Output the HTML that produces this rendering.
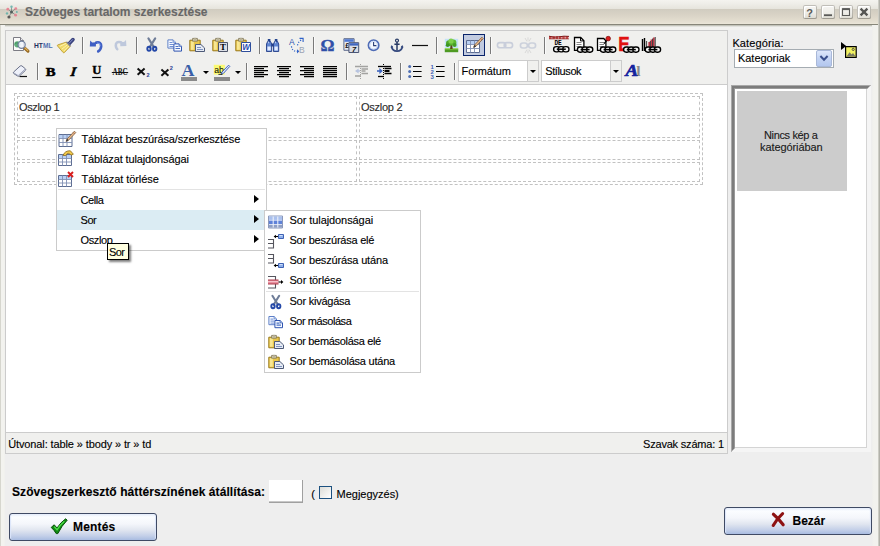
<!DOCTYPE html>
<html lang="hu">
<head>
<meta charset="utf-8">
<title>Szöveges tartalom szerkesztése</title>
<style>
*{box-sizing:border-box;margin:0;padding:0}
html,body{width:880px;height:546px;overflow:hidden}
body{background:#eeeeee;font-family:"Liberation Sans",sans-serif;font-size:11px;color:#000;position:relative}
.a{position:absolute}
.t{position:absolute;line-height:0;white-space:nowrap;-webkit-text-stroke:.12px currentColor}
.t::before{content:"";display:inline-block;height:20px}
svg{position:absolute;overflow:visible;z-index:5}
svg.mi{z-index:12}
#edge-l{left:0;top:25px;width:5px;height:521px;background:linear-gradient(90deg,#d6d6ce 0,#d6d6ce 1px,#f3f3ef 1px,#f3f3ef 4px,#efefed 5px)}
#edge-r{left:872px;top:25px;width:6px;height:521px;background:linear-gradient(90deg,#efefed 0,#f2f2ee 2px,#f2f2ee 6px)}
#edge-r2{left:878px;top:0;width:2px;height:546px;background:linear-gradient(90deg,#cdcdc5 0,#cdcdc5 1px,#b2b2aa 1px,#b2b2aa 2px);z-index:3}
#titlebar{left:0;top:0;width:880px;height:30px;background:linear-gradient(#f4f3ef 0,#eeede8 4px,#e6e4dc 9px,#cfcbbf 9px,#d2cdc1 10px,#d9d3c6 15px,#e0dacc 19px,#e7e2d5 23px,#ece8da 24px,#87867a 24px,#87867a 25px,#c3c4ba 25px,#c3c4ba 26px,#e2e2de 26px,#e2e2de 27px,#f2f2f0 27px,#f2f2f0 30px)}
.wb{top:5px;width:14px;height:14px;border-radius:2px;background:linear-gradient(#f7f6f3,#eeede8 55%,#dcdad1);box-shadow:inset 0 0 0 1px rgba(140,137,125,.55),inset 0 -1px 0 rgba(100,98,88,.35),inset 2px 2px 0 rgba(255,255,255,.95)}
#editor{left:5px;top:30px;width:723px;height:424px;border:1px solid #cccccc;background:#fff}
#toolbar{left:0;top:0;width:721px;height:54px;background:#f0f0ee;border-bottom:1px solid #cccccc}
#status{left:0;top:401px;width:721px;height:21px;background:#f0f0ee;border-top:1px solid #cccccc}
table.ed{position:absolute;left:8px;top:62px;width:689px;border:1px dashed #c2c2c2;border-spacing:2px;border-collapse:separate;table-layout:fixed}
table.ed td{border:1px dashed #c2c2c2;height:20px;padding:0}
.sep{position:absolute;width:2px;height:17px;background:linear-gradient(90deg,#7a7a7a 0,#7a7a7a 1px,#fbfbfb 1px,#fbfbfb 2px)}
.lb{position:absolute;height:22px;border:1px solid #cccccc;background:#fff}
.lb i{position:absolute;right:0;top:0;width:11px;height:20px;border-left:1px solid #cccccc;background:#f0f0ee}
.lb i::after{content:"";position:absolute;left:2px;top:9px;border:3px solid transparent;border-top:3px solid #000;border-bottom:0;width:0;height:0}
.arr{position:absolute;width:0;height:0;border:3px solid transparent;border-top:3px solid #000;border-bottom:0}
.btnact{position:absolute;width:22px;height:22px;border:1px solid #0a246a;background:#c2cbe0}
.menu{position:absolute;background:#fff;border:1px solid #cbcbcb;z-index:10}
.menu hr{position:absolute;left:1px;right:1px;height:1px;border:0;background:#e3e3e3}
.sub{position:absolute;width:0;height:0;border:4px solid transparent;border-left:5px solid #000;border-right:0}
.hl{position:absolute;left:0;right:0;height:20px;background:#dbecf3}
.btn{position:absolute;height:28px;width:148px;border:1px solid #3f4a64;border-radius:3px;background:linear-gradient(#e4ecfb 0,#fbfdff 3px,#f4f6fb 10px,#e1e6f0 16px,#c3cfe8 22px,#a9bce1 26px);box-shadow:inset 2px 0 1px -1px #dbe5fa,inset -2px 0 1px -1px #dbe5fa}
#tip{left:107px;top:243px;width:22px;height:17px;background:#ffffe1;border:1px solid #000;z-index:20;box-shadow:2px 2px 2px rgba(0,0,0,.5)}

</style>
</head>
<body>
<div id="titlebar" class="a"></div>
<div id="edge-l" class="a"></div>
<div id="edge-r" class="a"></div>
<div id="edge-r2" class="a"></div>
<div class="a wb" style="left:803px"></div>
<div class="a wb" style="left:821px"></div>
<div class="a wb" style="left:839px"></div>
<div class="a wb" style="left:857px"></div>

<div id="editor" class="a">
  <div id="toolbar" class="a"></div>
  <table class="ed"><colgroup><col style="width:340px"><col></colgroup>
    <tr><td></td><td></td></tr>
    <tr><td></td><td></td></tr>
    <tr><td></td><td></td></tr>
    <tr><td></td><td></td></tr>
  </table>
  <div id="status" class="a"></div>
</div>

<!-- toolbar widgets (page coordinates) -->
<div class="btnact" style="left:463px;top:34px"></div>
<svg style="left:11px;top:35px" width="20" height="20" viewBox="0 0 20 20" ><path d="M2.5 2.5h7l3 3v10h-10z" fill="#fcfcfc" stroke="#7c7c84"/><path d="M9.5 2.5v3h3" fill="#e8e8ee" stroke="#7c7c84"/>
<circle cx="6.3" cy="9.3" r="3.1" fill="#5fae7a"/><path d="M4 8.5q2-1.5 3.5 0t-1 3" fill="none" stroke="#3d8a5c" stroke-width=".8"/>
<path d="M13.4 12.8l3.6 3.4" stroke="#94661f" stroke-width="3" stroke-linecap="round"/><path d="M13.8 12.8l3 2.8" stroke="#e2b45a" stroke-width="1.2" stroke-linecap="round"/>
<circle cx="10.6" cy="9.7" r="3.6" fill="#eef3fb" fill-opacity=".85" stroke="#6f7f9e" stroke-width="1.2"/></svg>
<svg style="left:34px;top:35px" width="20" height="20" viewBox="0 0 20 20" ><text x="0" y="13" font-family="Liberation Sans,sans-serif" font-weight="bold" font-size="7" textLength="18.5" lengthAdjust="spacingAndGlyphs"><tspan fill="#1f2f5c">HT</tspan><tspan fill="#4f6fb0">ML</tspan></text></svg>
<svg style="left:57px;top:35px" width="20" height="20" viewBox="0 0 20 20" ><path d="M16 4.6l-4.2 4.4" stroke="#39427c" stroke-width="3.6" stroke-linecap="round"/><path d="M15.6 4.6l-3.4 3.6" stroke="#8d96d2" stroke-width="1" stroke-linecap="round"/>
<path d="M9.6 7l3.8 4.2-6 6.4q-.8.4-1.4-.2l-5.6-6.6q-.2-.8.6-1z" fill="#f0da68" stroke="#b8942a" stroke-width=".8"/><path d="M9 8.4l-6.2 3M10.4 9.8l-5.6 4.4M11.8 11l-5 5" stroke="#fdf2b0" stroke-width="1"/><path d="M9.6 7l3.8 4.2" stroke="#7a7f98" stroke-width="1.4"/></svg>
<svg style="left:87px;top:35px" width="20" height="20" viewBox="0 0 20 20" ><path d="M9.2 7.6q5.2-1 5 3.6-.2 3.2-3 5.2" fill="none" stroke="#3f5fc4" stroke-width="2.6" stroke-linecap="round"/><path d="M2.8 11.4l.4-6 2 2.1 3.8-.3-.1 4.4z" fill="#3f5fc4"/><path d="M10 8q3.6-.4 3.2 3.2" fill="none" stroke="#8fa8ee" stroke-width=".9"/></svg>
<svg style="left:110px;top:35px" width="20" height="20" viewBox="0 0 20 20" ><g opacity=".33"><path d="M10.8 7.2q-5.2-1.2-5 3.6.1 2 1.4 3.4" fill="none" stroke="#5b78b8" stroke-width="2.6" stroke-linecap="round"/><path d="M16.4 11l-.4-6-2 2.1-3.8-.3.1 4.4z" fill="#5b78b8"/></g></svg>
<svg style="left:141px;top:35px" width="20" height="20" viewBox="0 0 20 20" ><path d="M7.4 3.4l5.6 9M14.2 3.4l-5.6 9" stroke="#6f7d98" stroke-width="2.1" stroke-linecap="round"/><ellipse cx="8" cy="13.8" rx="1.7" ry="2.1" fill="none" stroke="#2448a8" stroke-width="1.9"/><ellipse cx="13.7" cy="13.8" rx="1.7" ry="2.1" fill="none" stroke="#2448a8" stroke-width="1.9"/></svg>
<svg style="left:164px;top:35px" width="20" height="20" viewBox="0 0 20 20" ><path d="M3.9 4.9h5.2l2.4 2.4v5.8h-7.6z" fill="#f6f9ff" stroke="#5f80c8"/><path d="M9.1 4.9v2.4h2.4" fill="#cfe0fa" stroke="#5f80c8" stroke-width=".8"/><path d="M5.5 7.5h3M5.5 9.5h4M5.5 11.5h4" stroke="#6f8fd4"/>
<path d="M9.9 8.9h5.2l2.4 2.4v4.8h-7.6z" fill="#f6f9ff" stroke="#2f55b0"/><path d="M15.1 8.9v2.4h2.4" fill="#cfe0fa" stroke="#2f55b0" stroke-width=".8"/><path d="M11.5 11.5h3M11.5 13.5h4.5" stroke="#4f74c4" stroke-width="1.1"/></svg>
<svg style="left:187px;top:35px" width="20" height="20" viewBox="0 0 20 20" ><path d="M2.8 5.2h10.4v10.6h-10.4z" fill="#e8c64a" stroke="#9a7a1c"/><path d="M3.8 6.2h3v8.6h-3z" fill="#f8e793"/><path d="M5.6 3.4h4.8v2.8h-4.8z" fill="#d9d2b4" stroke="#7e7558" stroke-width=".8"/><circle cx="8" cy="4" r=".9" fill="#f7f3da" stroke="#7e7558" stroke-width=".5"/><path d="M8.5 9.5h5.4l3.6 3.4v3.6h-9z" fill="#e6ebf4" stroke="#4d5a78"/><path d="M10 12.5h4M10 14.5h6" stroke="#7f93bf"/></svg>
<svg style="left:210px;top:35px" width="20" height="20" viewBox="0 0 20 20" ><path d="M2.8 5.2h10.4v10.6h-10.4z" fill="#e8c64a" stroke="#9a7a1c"/><path d="M3.8 6.2h3v8.6h-3z" fill="#f8e793"/><path d="M5.6 3.4h4.8v2.8h-4.8z" fill="#d9d2b4" stroke="#7e7558" stroke-width=".8"/><circle cx="8" cy="4" r=".9" fill="#f7f3da" stroke="#7e7558" stroke-width=".5"/><path d="M8.5 7.5h9v9h-9z" fill="#dcdfe6" stroke="#4d5468"/><text x="10" y="15.2" font-family="Liberation Serif,serif" font-weight="bold" font-size="9" fill="#000">T</text></svg>
<svg style="left:233px;top:35px" width="20" height="20" viewBox="0 0 20 20" ><path d="M2.8 5.2h10.4v10.6h-10.4z" fill="#e8c64a" stroke="#9a7a1c"/><path d="M3.8 6.2h3v8.6h-3z" fill="#f8e793"/><path d="M5.6 3.4h4.8v2.8h-4.8z" fill="#d9d2b4" stroke="#7e7558" stroke-width=".8"/><circle cx="8" cy="4" r=".9" fill="#f7f3da" stroke="#7e7558" stroke-width=".5"/><path d="M8.5 7.5h9v9h-9z" fill="#fdfdff" stroke="#2f4f9c"/><text x="9.3" y="15.3" font-family="Liberation Sans,sans-serif" font-weight="bold" font-style="italic" font-size="8.5" fill="#2a4db0" textLength="7.6" lengthAdjust="spacingAndGlyphs">W</text></svg>
<svg style="left:264px;top:35px" width="20" height="20" viewBox="0 0 20 20" ><path d="M3.8 4h2.6v3h-2.6zM10.8 4h2.6v3h-2.6z" fill="#24448e"/><path d="M2.5 9l1.2-2.6h2.8l1.2 2.6v7.5h-5.2zM9.5 9l1.2-2.6h2.8l1.2 2.6v7.5h-5.2z" fill="#5f84d0" stroke="#24408a" stroke-width=".9"/><path d="M7.5 8.5h2v3h-2z" fill="#24408a"/><path d="M3.4 11.6h3.4v4h-3.4zM10.4 11.6h3.4v4h-3.4z" fill="#e4edff"/><path d="M4 7.4h1M11 7.4h1" stroke="#b8ccf4" stroke-width="1.6"/></svg>
<svg style="left:287px;top:35px" width="20" height="20" viewBox="0 0 20 20" ><text x="2" y="9.5" font-family="Liberation Sans,sans-serif" font-size="8.5" fill="#2f55b0">A</text><text x="12" y="17.5" font-family="Liberation Sans,sans-serif" font-size="8.5" fill="#9aa3b4">B</text>
<path d="M4.5 11.2q.4 5 5.6 5.2" fill="none" stroke="#2f62c8" stroke-width="1.2" stroke-dasharray="1.2 1.5"/><path d="M10 14.2l2.4 2.1-2.4 2.1z" fill="#2f62c8"/>
<path d="M10.5 10.4q1-4.6 4.2-5.4" fill="none" stroke="#2f62c8" stroke-width="1.2" stroke-dasharray="1.2 1.5"/><path d="M12.5 3.4h3.6v3.6" fill="none" stroke="#2f62c8" stroke-width="1.1"/></svg>
<svg style="left:318px;top:35px" width="20" height="20" viewBox="0 0 20 20" ><text x="2.4" y="15.9" font-family="Liberation Serif,serif" font-weight="bold" font-size="17" fill="#2f4fa8" stroke="#2f4fa8" stroke-width=".4" textLength="14" lengthAdjust="spacingAndGlyphs">Ω</text></svg>
<svg style="left:341px;top:35px" width="20" height="20" viewBox="0 0 20 20" ><path d="M2.9 3.7h10.2v11.6h-10.2z" fill="#e6eaf2" stroke="#5d6a8c"/><path d="M3.4 4.2h9.2v2.6h-9.2z" fill="#4f78d4"/><text x="4.2" y="13" font-family="Liberation Sans,sans-serif" font-weight="bold" font-size="7.5" fill="#111">£</text>
<path d="M7.9 7.7h9.8v9.8h-9.8z" fill="#d9dde6" stroke="#4a5676"/><path d="M8.4 8.2h8.8v2.4h-8.8z" fill="#3f66c0"/><text x="11" y="17" font-family="Liberation Sans,sans-serif" font-weight="bold" font-style="italic" font-size="7.5" fill="#111">7</text></svg>
<svg style="left:364px;top:35px" width="20" height="20" viewBox="0 0 20 20" ><circle cx="9.6" cy="10.2" r="5.2" fill="#e6edfb" stroke="#4f6cb6" stroke-width="1.7"/><circle cx="9.6" cy="10.2" r="3.9" fill="#f6f9ff" stroke="#c2d0f0" stroke-width=".8"/><path d="M9.6 7v3.6h2.8" fill="none" stroke="#2c3f78" stroke-width="1.1"/></svg>
<svg style="left:387px;top:35px" width="20" height="20" viewBox="0 0 20 20" ><circle cx="10" cy="5.6" r="1.5" fill="none" stroke="#2a3c66" stroke-width="1.2"/><path d="M10 7v8.6M7.4 9.2h5.2" stroke="#2a3c66" stroke-width="1.5"/><path d="M4.6 11.4q.6 4.6 5.4 4.8 4.8-.2 5.4-4.8" fill="none" stroke="#34497e" stroke-width="1.8"/><path d="M3.6 12.8l1-2.8 1.8 2.2zM16.4 12.8l-1-2.8-1.8 2.2z" fill="#34497e"/></svg>
<svg style="left:410px;top:35px" width="20" height="20" viewBox="0 0 20 20" ><path d="M2 10.5h16" stroke="#111" stroke-width="1.2"/></svg>
<svg style="left:441px;top:35px" width="20" height="20" viewBox="0 0 20 20" ><path d="M3.8 3.8h13.4v13.4h-13.4z" fill="#c4e2f8"/><path d="M3.8 13.8h13.4v3.4h-13.4z" fill="#4f9a22"/><path d="M3.8 13.2h13.4v1.2h-13.4z" fill="#9ad84a"/>
<path d="M9.6 9.5h1.6l.5 4.6h-2.6z" fill="#5a4516"/><circle cx="8" cy="8.2" r="3" fill="#4fa628"/><circle cx="12.2" cy="7.6" r="3.2" fill="#5cb82e"/><circle cx="10" cy="6" r="2.6" fill="#7fd04a"/><circle cx="13.6" cy="10" r="2" fill="#459e24"/><circle cx="6.6" cy="10.2" r="1.8" fill="#3c9420"/></svg>
<svg style="left:464px;top:35px" width="20" height="20" viewBox="0 0 20 20" ><path d="M2.5 5.5h13v12h-13z" fill="#fff" stroke="#5d6d92"/><path d="M3 6h12v3h-12z" fill="#b9d0f4"/><path d="M2.5 9.5h13M2.5 13.5h13M6.5 5.5v12M10.5 5.5v12" stroke="#7f8fb2" stroke-width=".9"/>
<path d="M17.9 2.2l1.4 1.4-7.2 7.6-2.6 1.2 1.2-2.6z" fill="#e8b98c" stroke="#7a5a3a" stroke-width=".8"/><path d="M16.6 3.4l1.5 1.5" stroke="#b06a4a" stroke-width="1"/><path d="M9.5 12.4l1.2-2.6 1.4 1.4z" fill="#333"/></svg>
<svg style="left:495px;top:35px" width="20" height="20" viewBox="0 0 20 20" ><g opacity=".55" fill="none" stroke="#aab4cc" stroke-width="1.6"><rect x="2.4" y="7.6" width="8.4" height="5.2" rx="2.6"/><rect x="9.2" y="7.6" width="8.4" height="5.2" rx="2.6"/></g></svg>
<svg style="left:518px;top:35px" width="20" height="20" viewBox="0 0 20 20" ><g opacity=".5" fill="none" stroke="#aab4cc" stroke-width="1.6"><rect x="2.4" y="8" width="7" height="5" rx="2.5"/><rect x="10.6" y="8" width="7" height="5" rx="2.5"/></g><g opacity=".5" stroke="#c4c4c4" stroke-width="1"><path d="M7 3l2 3.4M13 3l-2 3.4M10 2.4v3.4M7 18l2-3.4M13 18l-2-3.4M10 18.4v-3"/></g></svg>
<svg style="left:549px;top:35px" width="20" height="20" viewBox="0 0 20 20" ><path d="M0 2.6h20" stroke="#c84a4a" stroke-width="2.6" stroke-dasharray="2.6 .7"/><path d="M0 1.2q5 1.6 10 .6t10-.4" fill="none" stroke="#7e1a1a" stroke-width="1"/><path d="M0 3.9h20" stroke="#8e2a2a" stroke-width=".7"/><text x="5.4" y="10.4" font-family="Liberation Mono,monospace" font-weight="bold" font-size="6.4" fill="#000" textLength="7.4" lengthAdjust="spacingAndGlyphs">DE</text><g fill="#f2f2f2" stroke="#000" stroke-width="1.35"><rect x="4.6" y="11.6" width="6.2" height="5.2" rx="2.6"/><rect x="9.2" y="11.6" width="6.2" height="5.2" rx="2.6"/><rect x="13.799999999999999" y="11.6" width="6.2" height="5.2" rx="2.6"/></g><path d="M7.8 14.2h9" stroke="#000" stroke-width="1.5"/></svg>
<svg style="left:572px;top:35px" width="20" height="20" viewBox="0 0 20 20" ><path d="M2.5 2.5h6.2l3.2 3.2v9.6h-9.4z" fill="#fff" stroke="#000" stroke-width="1.3"/><path d="M8.5 2.5v3.4h3.4" fill="none" stroke="#000"/><path d="M4.5 7.5h5M4.5 9.5h5M4.5 11.5h4" stroke="#777" stroke-width=".9"/><g fill="#f2f2f2" stroke="#000" stroke-width="1.35"><rect x="5.4" y="12" width="6.2" height="5.2" rx="2.6"/><rect x="10.0" y="12" width="6.2" height="5.2" rx="2.6"/><rect x="14.6" y="12" width="6.2" height="5.2" rx="2.6"/></g><path d="M8.600000000000001 14.6h9" stroke="#000" stroke-width="1.5"/></svg>
<svg style="left:595px;top:35px" width="20" height="20" viewBox="0 0 20 20" ><path d="M2.5 3.5h6.2l2.2 2.2v9.6h-8.4z" fill="#fff" stroke="#000" stroke-width="1.3"/><path d="M4.5 7.5h4.5M4.5 9.5h4.5M4.5 11.5h4" stroke="#777" stroke-width=".9"/><path d="M9 8.6l3.6-4" stroke="#000" stroke-width="1.3"/><circle cx="13.2" cy="3.6" r="2.3" fill="#d81e1e" stroke="#7a0f0f" stroke-width=".7"/><g fill="#f2f2f2" stroke="#000" stroke-width="1.35"><rect x="5.4" y="12" width="6.2" height="5.2" rx="2.6"/><rect x="10.0" y="12" width="6.2" height="5.2" rx="2.6"/><rect x="14.6" y="12" width="6.2" height="5.2" rx="2.6"/></g><path d="M8.600000000000001 14.6h9" stroke="#000" stroke-width="1.5"/></svg>
<svg style="left:618px;top:35px" width="20" height="20" viewBox="0 0 20 20" ><text x="0.2" y="15.6" font-family="Liberation Sans,sans-serif" font-weight="bold" font-size="20" fill="#e01010" stroke="#e01010" stroke-width=".5" textLength="11.4" lengthAdjust="spacingAndGlyphs">E</text><g fill="#f2f2f2" stroke="#000" stroke-width="1.35"><rect x="5.6" y="12" width="6.2" height="5.2" rx="2.6"/><rect x="10.2" y="12" width="6.2" height="5.2" rx="2.6"/><rect x="14.799999999999999" y="12" width="6.2" height="5.2" rx="2.6"/></g><path d="M8.8 14.6h9" stroke="#000" stroke-width="1.5"/></svg>
<svg style="left:641px;top:35px" width="20" height="20" viewBox="0 0 20 20" ><path d="M1.5 4v12M3.5 3v13" stroke="#000" stroke-width="1.4"/><path d="M5.5 6v10" stroke="#555" stroke-width="1.2"/><path d="M8.2 7v8M10.4 4.6v10M12.8 2.4v12" stroke="#c43a4a" stroke-width="1.7"/><path d="M9.3 6v9M11.6 3.6v11M14.2 2v11" stroke="#222" stroke-width=".9"/><g fill="#f2f2f2" stroke="#000" stroke-width="1.35"><rect x="4.2" y="12" width="6.2" height="5.2" rx="2.6"/><rect x="8.8" y="12" width="6.2" height="5.2" rx="2.6"/><rect x="13.399999999999999" y="12" width="6.2" height="5.2" rx="2.6"/></g><path d="M7.4 14.6h9" stroke="#000" stroke-width="1.5"/></svg>
<svg style="left:11px;top:61px" width="20" height="20" viewBox="0 0 20 20" ><path d="M2.6 11l6.6-6q.9-.7 1.8 0l3.4 2.8q.7.8 0 1.6l-6 5.6q-.9.6-1.8 0l-3.8-2.4q-.8-.8-.2-1.6z" fill="#eef1fa" stroke="#6a7088" stroke-width="1"/><path d="M3 12l4.2 2.6 6.8-6.4" fill="none" stroke="#9aa0b8" stroke-width=".9"/><path d="M8.6 15.5h7.4" stroke="#111" stroke-width="1.2"/></svg>
<svg style="left:42px;top:61px" width="20" height="20" viewBox="0 0 20 20" ><text x="3.8" y="14.6" font-family="Liberation Serif,serif" font-weight="bold" font-size="13" fill="#000" textLength="9.8" lengthAdjust="spacingAndGlyphs" stroke="#000" stroke-width=".5">B</text></svg>
<svg style="left:65px;top:61px" width="20" height="20" viewBox="0 0 20 20" ><text x="5.2" y="14.6" font-family="Liberation Serif,serif" font-weight="bold" font-style="italic" font-size="13" fill="#000" stroke="#000" stroke-width=".6" transform="skewX(-8) translate(2,0)">I</text></svg>
<svg style="left:88px;top:61px" width="20" height="20" viewBox="0 0 20 20" ><text x="4.2" y="13.2" font-family="Liberation Serif,serif" font-weight="bold" font-size="11.6" fill="#000" textLength="9" lengthAdjust="spacingAndGlyphs" stroke="#000" stroke-width=".4">U</text><path d="M4.2 16.5h9" stroke="#000" stroke-width="1.2"/></svg>
<svg style="left:111px;top:61px" width="20" height="20" viewBox="0 0 20 20" ><text x="1.6" y="14" font-family="Liberation Serif,serif" font-weight="bold" font-size="9.6" fill="#111" textLength="15" lengthAdjust="spacingAndGlyphs">ABC</text><path d="M.8 11.5h16.4" stroke="#111" stroke-width="1"/></svg>
<svg style="left:134px;top:61px" width="20" height="20" viewBox="0 0 20 20" ><path d="M3.6 7.6l7 6.2M10.6 7.6l-7 6.2" stroke="#111" stroke-width="2"/><text x="12.6" y="16" font-family="Liberation Sans,sans-serif" font-weight="bold" font-size="5.6" fill="#2a3f94">2</text></svg>
<svg style="left:157px;top:61px" width="20" height="20" viewBox="0 0 20 20" ><path d="M4.4 8.6l7 6.2M11.4 8.6l-7 6.2" stroke="#111" stroke-width="2"/><text x="12.8" y="8.8" font-family="Liberation Sans,sans-serif" font-weight="bold" font-size="5.6" fill="#2a3f94">2</text></svg>
<svg style="left:180px;top:61px" width="20" height="20" viewBox="0 0 20 20" ><text x="1.6" y="14.6" font-family="Liberation Serif,serif" font-weight="bold" font-size="16" fill="#3a5fa8" textLength="13" lengthAdjust="spacingAndGlyphs">A</text><path d="M1 16h16v4h-16z" fill="#8a8a8a"/></svg>
<svg style="left:212px;top:61px" width="20" height="20" viewBox="0 0 20 20" ><path d="M1.8 3.8h11v9.8h-11z" fill="#fafa72"/><text x="2.2" y="11.6" font-family="Liberation Sans,sans-serif" font-size="9.6" fill="#000" textLength="9.6" lengthAdjust="spacingAndGlyphs">ab</text><path d="M16.6 4.2l1.2 1.2-6.4 7-2.4 1 1-2.4z" fill="#dfe8fb" stroke="#2f55b5" stroke-width=".9"/><path d="M6.4 13.4h4" stroke="#222" stroke-width=".9"/><path d="M2 16h16v4h-16z" fill="#8a8a8a"/></svg>
<svg style="left:251px;top:61px" width="20" height="20" viewBox="0 0 20 20" ><path d="M3 5.5H17M3 7.5H13M3 9.5H17M3 11.5H13M3 13.5H17M3 15.5H13" stroke="#000" stroke-width="1.25"/></svg>
<svg style="left:274px;top:61px" width="20" height="20" viewBox="0 0 20 20" ><path d="M3 5.5H17M5 7.5H15M3 9.5H17M5 11.5H15M3 13.5H17M5 15.5H15" stroke="#000" stroke-width="1.25"/></svg>
<svg style="left:297px;top:61px" width="20" height="20" viewBox="0 0 20 20" ><path d="M3 5.5H17M7 7.5H17M3 9.5H17M7 11.5H17M3 13.5H17M7 15.5H17" stroke="#000" stroke-width="1.25"/></svg>
<svg style="left:320px;top:61px" width="20" height="20" viewBox="0 0 20 20" ><path d="M3 5.5H17M3 7.5H17M3 9.5H17M3 11.5H17M3 13.5H17M3 15.5H17" stroke="#000" stroke-width="1.25"/></svg>
<svg style="left:351px;top:61px" width="20" height="20" viewBox="0 0 20 20" ><g opacity=".32"><path d="M9.5 3v15" stroke="#000" stroke-dasharray="1 1"/><path d="M4 5.5h13M10.5 8h6.5M10.5 10h4M10.5 12.5h6.5M4 15h6" stroke="#000" stroke-width="1.3"/><path d="M4 10l3.6-2.6v5.2z" fill="#3f66c0"/><path d="M7 10h2" stroke="#3f66c0" stroke-width="1.4"/></g></svg>
<svg style="left:374px;top:61px" width="20" height="20" viewBox="0 0 20 20" ><path d="M9.5 3v15" stroke="#000" stroke-dasharray="1 1"/><path d="M4 5.5h13" stroke="#000" stroke-width="1.3"/><path d="M10.5 7.5h7M10.5 12.5h7" stroke="#000" stroke-width="1.6"/><path d="M10.5 10h5" stroke="#000" stroke-width="2"/><path d="M4 15.5h6" stroke="#000" stroke-width="1.3"/><path d="M3 10h3" stroke="#3f66c0" stroke-width="1.6"/><path d="M5.4 7l3.4 3-3.4 3z" fill="#3f66c0"/></svg>
<svg style="left:405px;top:61px" width="20" height="20" viewBox="0 0 20 20" ><g fill="#4f6fb4"><circle cx="4.7" cy="5.6" r="1.5"/><circle cx="4.7" cy="10.6" r="1.5"/><circle cx="4.7" cy="15.6" r="1.5"/></g><path d="M8 5.5h8.6M8 10.5h8.6M8 15.5h8.6" stroke="#000" stroke-width="1.1"/></svg>
<svg style="left:428px;top:61px" width="20" height="20" viewBox="0 0 20 20" ><g font-family="Liberation Sans,sans-serif" font-weight="bold" font-size="6" fill="#3f62b4"><text x="2.6" y="7.6">1</text><text x="2.6" y="12.8">2</text><text x="2.6" y="18">3</text></g><path d="M8 5.5h8.6M8 10.5h8.6M8 15.5h8.6" stroke="#000" stroke-width="1.1"/></svg>
<svg style="left:624px;top:61px" width="20" height="20" viewBox="0 0 20 20" ><text x="12.2" y="14.8" font-family="Liberation Serif,serif" font-weight="bold" font-size="15.5" fill="#8a8a8a">l</text><text x="1.6" y="14.8" font-family="Liberation Serif,serif" font-weight="bold" font-style="italic" font-size="16.5" fill="#16249e" stroke="#16249e" stroke-width=".7" textLength="12.6" lengthAdjust="spacingAndGlyphs">A</text></svg>
<div class="sep" style="left:82px;top:37px"></div>
<div class="sep" style="left:136px;top:37px"></div>
<div class="sep" style="left:259px;top:37px"></div>
<div class="sep" style="left:313px;top:37px"></div>
<div class="sep" style="left:436px;top:37px"></div>
<div class="sep" style="left:490px;top:37px"></div>
<div class="sep" style="left:544px;top:37px"></div>
<div class="sep" style="left:37px;top:63px"></div>
<div class="sep" style="left:246px;top:63px"></div>
<div class="sep" style="left:346px;top:63px"></div>
<div class="sep" style="left:400px;top:63px"></div>
<div class="sep" style="left:454px;top:63px"></div>
<div class="lb" style="left:458px;top:60px;width:81px"><i></i></div>
<div class="lb" style="left:541px;top:60px;width:81px"><i></i></div>
<div class="arr" style="left:203px;top:71px"></div>
<div class="arr" style="left:235px;top:71px"></div>

<!-- right panel -->
<div class="a" style="left:734px;top:49px;width:100px;height:19px;border:1px solid #a5acb2;background:#fff"></div>
<div class="a" style="left:731px;top:85px;width:140px;height:367px;background:#fff;border-style:solid;border-width:4px;border-color:#7c7c7c #f5f5f5 #f5f5f5 #7c7c7c;box-shadow:inset -1px -1px 0 #d4d4d4"></div>
<div class="a" style="left:731px;top:85px;width:1px;height:366px;background:#a8a8a8"></div><div class="a" style="left:731px;top:85px;width:139px;height:1px;background:#a8a8a8"></div><div class="a" style="left:734px;top:88px;width:1px;height:360px;background:#9a9a9a"></div><div class="a" style="left:734px;top:88px;width:133px;height:1px;background:#9a9a9a"></div>
<div class="a" style="left:737px;top:91px;width:110px;height:100px;background:#cccccc"></div>
<svg style="left:5px;top:5px" width="14" height="14" viewBox="0 0 14 14" ><g opacity=".85"><path d="M6.5 7L2.8 4.2M6.5 7l4.2-3.4M6.5 7l-2.4 4.8M6.5 7l4 3M6.5 7V2" stroke="#6a7a76" stroke-width=".8"/><circle cx="6.5" cy="7" r="1.5" fill="#3c4a48"/><circle cx="2.8" cy="4.2" r="1.4" fill="#e8788a"/><circle cx="10.8" cy="3.6" r="1.4" fill="#e8788a"/><circle cx="4" cy="12" r="1.6" fill="#444"/><circle cx="10.6" cy="10.2" r="1.4" fill="#e8788a"/><circle cx="6.5" cy="1.8" r="1.2" fill="#5fb0aa"/><circle cx="2" cy="8.4" r="1.2" fill="#5fb0aa"/><circle cx="11.8" cy="7" r="1" fill="#5fb0aa"/></g></svg>
<svg style="left:803px;top:5px" width="14" height="14" viewBox="0 0 14 14" ><text x="3.3" y="11.6" font-family="Liberation Sans,sans-serif" font-weight="bold" font-size="11" fill="#5a5a58">?</text></svg>
<svg style="left:821px;top:5px" width="14" height="14" viewBox="0 0 14 14" ><path d="M3 10.2h8" stroke="#5a5a58" stroke-width="1.8"/></svg>
<svg style="left:839px;top:5px" width="14" height="14" viewBox="0 0 14 14" ><path d="M3.5 3.7h7v6.8h-7z" fill="none" stroke="#5a5a58" stroke-width="1.1"/><path d="M3.5 4.2h7" stroke="#5a5a58" stroke-width="1.8"/></svg>
<svg style="left:857px;top:5px" width="14" height="14" viewBox="0 0 14 14" ><path d="M3.6 3.6l6.8 6.8M10.4 3.6l-6.8 6.8" stroke="#555553" stroke-width="2.3"/></svg>
<svg style="left:816px;top:50px" width="16" height="17" viewBox="0 0 16 17" ><defs><linearGradient id="xpb" x1="0" y1="0" x2="0" y2="1"><stop offset="0" stop-color="#dfe8fb"/><stop offset=".5" stop-color="#c3d3f3"/><stop offset="1" stop-color="#b2c6ee"/></linearGradient></defs><rect x=".5" y=".5" width="15" height="16" rx="1.5" fill="url(#xpb)" stroke="#a9b8d8"/><path d="M4.4 6l3.6 3.8 3.6-3.8" fill="none" stroke="#3a4f8c" stroke-width="2"/></svg>
<svg style="left:840px;top:41px" width="18" height="18" viewBox="0 0 18 18" ><path d="M1 1l5.2 4-5.2 4z" fill="#000"/><path d="M5.6 5.6h10.6v10.8h-10.6z" fill="#f2f262" stroke="#000" stroke-width="1.2"/><path d="M6.4 15.6l3.2-4.4 2 2.4 1.4-1.6 2.6 3.6z" fill="#7a7a62"/><circle cx="13.2" cy="8.4" r="1.1" fill="none" stroke="#333" stroke-width=".8"/></svg>
<svg style="left:50px;top:518px" width="18" height="17" viewBox="0 0 18 17" ><path d="M1.2 9.4l3-2.6 2.8 3.2q3.8-5.8 8.6-9.2l1.6 1.4q-5.6 5.6-9.4 13.4h-1.6q-1.8-3.4-5-6.2z" fill="#0f8a12" stroke="#0a520c" stroke-width="1"/><path d="M4.2 8.6l2.8 3.2q3.4-5.2 7.4-8.6" fill="none" stroke="#4fe04a" stroke-width="1.3"/></svg>
<svg style="left:771px;top:512px" width="15" height="15" viewBox="0 0 15 15" ><path d="M2.4 2.2q4.6 3.8 9.8 10.6M11.6 1.6q-5.4 4.8-9.4 11.8" fill="none" stroke="#8e1212" stroke-width="3.1" stroke-linecap="round"/></svg>

<!-- bottom -->
<div class="a" style="left:269px;top:480px;width:34px;height:23px;background:#fff;box-shadow:inset -1px -1px 0 #a0a0a0,inset 0 -2px 0 #c8c8c8"></div>
<div class="a" style="left:319px;top:486px;width:13px;height:13px;border:1px solid #1c5180;background:linear-gradient(135deg,#dcdcd7,#fff)"></div>
<div class="btn" style="left:9px;top:513px"></div>
<div class="btn" style="left:724px;top:507px"></div>

<!-- context menus -->
<div class="menu" style="left:56px;top:128px;width:211px;height:123px">
  <hr style="top:60px">
  <div class="hl" style="top:81px"></div>
  <div class="sub" style="left:197px;top:66px"></div>
  <div class="sub" style="left:197px;top:86px"></div>
  <div class="sub" style="left:197px;top:106px"></div>
</div>
<div class="menu" style="left:264px;top:210px;width:157px;height:163px;z-index:11">
  <hr style="top:80px">
</div>
<svg style="left:58px;top:129.5px" width="20" height="20" viewBox="0 0 20 20" class="mi"><g transform="translate(-1.5,-1)"><path d="M2.5 5.5h13v12h-13z" fill="#fff" stroke="#5d6d92"/><path d="M3 6h12v3h-12z" fill="#b9d0f4"/><path d="M2.5 9.5h13M2.5 13.5h13M6.5 5.5v12M10.5 5.5v12" stroke="#7f8fb2" stroke-width=".9"/>
<path d="M17.9 2.2l1.4 1.4-7.2 7.6-2.6 1.2 1.2-2.6z" fill="#e8b98c" stroke="#7a5a3a" stroke-width=".8"/><path d="M16.6 3.4l1.5 1.5" stroke="#b06a4a" stroke-width="1"/><path d="M9.5 12.4l1.2-2.6 1.4 1.4z" fill="#333"/></g></svg>
<svg style="left:57.2px;top:149.2px" width="20" height="20" viewBox="0 0 20 20" class="mi"><path d="M1.5 5.5h13v11h-13z" fill="#fff" stroke="#5d6d92"/><path d="M2 6h12v3h-12z" fill="#b9d0f4"/><path d="M1.5 9.5h13M1.5 13h13M5.5 5.5v11M9.5 5.5v11" stroke="#7f8fb2" stroke-width=".9"/>
<path d="M6 6.4q2-5 7.4-4.6l3 3.4-2.4 1-2-2q-2.4 0-3.2 2.4z" fill="#f0c84a" stroke="#8a6a1c" stroke-width=".8"/></svg>
<svg style="left:57.2px;top:169.6px" width="20" height="20" viewBox="0 0 20 20" class="mi"><path d="M1.5 5.5h13v11h-13z" fill="#fff" stroke="#5d6d92"/><path d="M2 6h12v3h-12z" fill="#b9d0f4"/><path d="M1.5 9.5h13M1.5 13h13M5.5 5.5v11M9.5 5.5v11" stroke="#7f8fb2" stroke-width=".9"/>
<path d="M11 2l5 5M16 2l-5 5" stroke="#d81e1e" stroke-width="1.9"/></svg>
<svg style="left:267.5px;top:212.5px" width="20" height="20" viewBox="0 0 20 20" class="mi"><path d="M.5 3h14v12h-14z" fill="#eef2fa" stroke="#8a98ba"/><path d="M1 3.5h13v3.4h-13z" fill="#a9c0ee"/><path d="M1 7.6h13v3.4h-13z" fill="#5f82d8"/><path d="M1 11.8h13v2.8h-13z" fill="#8f9fc4"/><path d="M5.2 3.5v11M9.8 3.5v11" stroke="#f2f5fc" stroke-width="1"/></svg>
<svg style="left:267.5px;top:232px" width="20" height="20" viewBox="0 0 20 20" class="mi"><path d="M0 7.5h5.5M0 11.5h5.5M0 16h5.5M5.5 7v9.5" fill="none" stroke="#55555e" stroke-width="1.1"/><path d="M7.6 4.5h3" stroke="#000" stroke-width="1.1"/><path d="M8 2.7l-2.4 1.8 2.4 1.8z" fill="#000"/><path d="M10.5 2.5h5v4h-5z" fill="#8fb0ea" stroke="#3f62b4"/><path d="M11.5 3.5h3" stroke="#cfe0fb"/></svg>
<svg style="left:267.5px;top:252px" width="20" height="20" viewBox="0 0 20 20" class="mi"><path d="M0 2.5h5.5M0 6.5h5.5M0 11h5.5M5.5 2v9.5" fill="none" stroke="#55555e" stroke-width="1.1"/><path d="M7.6 13.5h3" stroke="#000" stroke-width="1.1"/><path d="M8 11.7l-2.4 1.8 2.4 1.8z" fill="#000"/><path d="M10.5 11.5h5v4h-5z" fill="#8fb0ea" stroke="#3f62b4"/><path d="M11.5 12.5h3" stroke="#cfe0fb"/></svg>
<svg style="left:267.5px;top:272.5px" width="20" height="20" viewBox="0 0 20 20" class="mi"><path d="M0 3.5h7.5M0 15h7.5M7.5 3v12.5" fill="none" stroke="#55555e" stroke-width="1.1"/><path d="M0 7h10.5v4h-10.5z" fill="#e88a9a"/><path d="M0 7h10.5M0 11h10.5" stroke="#a83a4a" stroke-width="1"/><path d="M0 8.6h10.5" stroke="#f8c8d0" stroke-width="1"/><path d="M10.5 9h3" stroke="#000" stroke-width="1.1"/><path d="M13 7.1l2.4 1.9-2.4 1.9z" fill="#000"/></svg>
<svg style="left:267.5px;top:293.5px" width="20" height="20" viewBox="0 0 20 20" class="mi"><g transform="translate(-3,-1.6)"><path d="M7.4 3.4l5.6 9M14.2 3.4l-5.6 9" stroke="#6f7d98" stroke-width="2.1" stroke-linecap="round"/><ellipse cx="8" cy="13.8" rx="1.7" ry="2.1" fill="none" stroke="#2448a8" stroke-width="1.9"/><ellipse cx="13.7" cy="13.8" rx="1.7" ry="2.1" fill="none" stroke="#2448a8" stroke-width="1.9"/></g></svg>
<svg style="left:267.5px;top:313.5px" width="20" height="20" viewBox="0 0 20 20" class="mi"><g transform="translate(-3,-2.4)"><path d="M3.9 4.9h5.2l2.4 2.4v5.8h-7.6z" fill="#f6f9ff" stroke="#5f80c8"/><path d="M9.1 4.9v2.4h2.4" fill="#cfe0fa" stroke="#5f80c8" stroke-width=".8"/><path d="M5.5 7.5h3M5.5 9.5h4M5.5 11.5h4" stroke="#6f8fd4"/>
<path d="M9.9 8.9h5.2l2.4 2.4v4.8h-7.6z" fill="#f6f9ff" stroke="#2f55b0"/><path d="M15.1 8.9v2.4h2.4" fill="#cfe0fa" stroke="#2f55b0" stroke-width=".8"/><path d="M11.5 11.5h3M11.5 13.5h4.5" stroke="#4f74c4" stroke-width="1.1"/></g></svg>
<svg style="left:267.5px;top:333.5px" width="20" height="20" viewBox="0 0 20 20" class="mi"><g transform="translate(-2,-2)"><path d="M2.8 5.2h10.4v10.6h-10.4z" fill="#e8c64a" stroke="#9a7a1c"/><path d="M3.8 6.2h3v8.6h-3z" fill="#f8e793"/><path d="M5.6 3.4h4.8v2.8h-4.8z" fill="#d9d2b4" stroke="#7e7558" stroke-width=".8"/><circle cx="8" cy="4" r=".9" fill="#f7f3da" stroke="#7e7558" stroke-width=".5"/><path d="M8.5 9.5h5.4l3.6 3.4v3.6h-9z" fill="#e6ebf4" stroke="#4d5a78"/><path d="M10 12.5h4M10 14.5h6" stroke="#7f93bf"/></g></svg>
<svg style="left:267.5px;top:353.5px" width="20" height="20" viewBox="0 0 20 20" class="mi"><g transform="translate(-2,-2)"><path d="M2.8 5.2h10.4v10.6h-10.4z" fill="#e8c64a" stroke="#9a7a1c"/><path d="M3.8 6.2h3v8.6h-3z" fill="#f8e793"/><path d="M5.6 3.4h4.8v2.8h-4.8z" fill="#d9d2b4" stroke="#7e7558" stroke-width=".8"/><circle cx="8" cy="4" r=".9" fill="#f7f3da" stroke="#7e7558" stroke-width=".5"/><path d="M8.5 9.5h5.4l3.6 3.4v3.6h-9z" fill="#e6ebf4" stroke="#4d5a78"/><path d="M10 12.5h4M10 14.5h6" stroke="#7f93bf"/></g></svg>
<div id="tip" class="a"></div>

<!-- text labels -->
<span class="t" id="t0" style="left:25.0px;top:-4px;font-size:12px;color:#686868;font-weight:bold;letter-spacing:-0.031px;">Szöveges tartalom szerkesztése</span>
<span class="t" id="t1" style="left:19px;top:91px;font-size:11px;color:#2a2a2a;letter-spacing:-0.386px;">Oszlop 1</span>
<span class="t" id="t2" style="left:361px;top:91px;font-size:11px;color:#2a2a2a;letter-spacing:-0.257px;">Oszlop 2</span>
<span class="t" id="t3" style="left:8.2px;top:428px;font-size:11px;color:#000;letter-spacing:-0.116px;">Útvonal: table » tbody » tr » td</span>
<span class="t" id="t4" style="left:643.0px;top:428px;font-size:11px;color:#000;letter-spacing:-0.193px;">Szavak száma: 1</span>
<span class="t" id="t5" style="left:461.6px;top:55px;font-size:11px;color:#000;letter-spacing:-0.129px;">Formátum</span>
<span class="t" id="t6" style="left:545.2px;top:55px;font-size:11px;color:#000;letter-spacing:-0.386px;">Stílusok</span>
<span class="t" id="t7" style="left:732.4px;top:27px;font-size:11px;color:#000;letter-spacing:0.120px;">Kategória:</span>
<span class="t" id="t8" style="left:738.0px;top:42px;font-size:11px;color:#000;letter-spacing:-0.040px;">Kategoriak</span>
<span class="t" id="t9" style="left:764.0px;top:119px;font-size:11px;color:#1a1a1a;letter-spacing:-0.360px;">Nincs kép a</span>
<span class="t" id="t10" style="left:760.0px;top:131px;font-size:11px;color:#1a1a1a;letter-spacing:-0.082px;">kategóriában</span>
<span class="t" id="t11" style="left:12.0px;top:476px;font-size:12px;color:#000;font-weight:bold;letter-spacing:0.086px;">Szövegszerkesztő háttérszínének átállítása:</span>
<span class="t" id="t12" style="left:311.2px;top:478px;font-size:11px;color:#000;letter-spacing:0.000px;">(</span>
<span class="t" id="t13" style="left:336.6px;top:478px;font-size:11px;color:#000;letter-spacing:-0.018px;">Megjegyzés)</span>
<span class="t" id="t14" style="left:73.0px;top:511px;font-size:12px;color:#000;font-weight:bold;letter-spacing:0.180px;">Mentés</span>
<span class="t" id="t15" style="left:792.6px;top:505px;font-size:12px;color:#000;font-weight:bold;letter-spacing:-0.045px;">Bezár</span>
<span class="t" id="t16" style="left:81.5px;top:123px;font-size:11px;color:#000;letter-spacing:-0.150px;z-index:12">Táblázat beszúrása/szerkesztése</span>
<span class="t" id="t17" style="left:81.5px;top:143px;font-size:11px;color:#000;letter-spacing:-0.129px;z-index:12">Táblázat tulajdonságai</span>
<span class="t" id="t18" style="left:81.5px;top:163px;font-size:11px;color:#000;letter-spacing:-0.060px;z-index:12">Táblázat törlése</span>
<span class="t" id="t19" style="left:80.5px;top:184px;font-size:11px;color:#000;letter-spacing:-0.450px;z-index:12">Cella</span>
<span class="t" id="t20" style="left:80.5px;top:204px;font-size:11px;color:#000;letter-spacing:-0.450px;z-index:12">Sor</span>
<span class="t" id="t21" style="left:80.5px;top:224px;font-size:11px;color:#000;letter-spacing:-0.360px;z-index:12">Oszlop</span>
<span class="t" id="t22" style="left:289.4px;top:204px;font-size:11px;color:#000;letter-spacing:-0.079px;z-index:12">Sor tulajdonságai</span>
<span class="t" id="t23" style="left:289.4px;top:224px;font-size:11px;color:#000;letter-spacing:-0.225px;z-index:12">Sor beszúrása elé</span>
<span class="t" id="t24" style="left:289.4px;top:244px;font-size:11px;color:#000;letter-spacing:-0.160px;z-index:12">Sor beszúrása utána</span>
<span class="t" id="t25" style="left:289.4px;top:264px;font-size:11px;color:#000;letter-spacing:-0.108px;z-index:12">Sor törlése</span>
<span class="t" id="t26" style="left:289.4px;top:285px;font-size:11px;color:#000;letter-spacing:-0.229px;z-index:12">Sor kivágása</span>
<span class="t" id="t27" style="left:289.4px;top:305px;font-size:11px;color:#000;letter-spacing:-0.442px;z-index:12">Sor másolása</span>
<span class="t" id="t28" style="left:289.4px;top:325px;font-size:11px;color:#000;letter-spacing:-0.318px;z-index:12">Sor bemásolása elé</span>
<span class="t" id="t29" style="left:289.4px;top:345px;font-size:11px;color:#000;letter-spacing:-0.227px;z-index:12">Sor bemásolása utána</span>
<span class="t" id="t30" style="left:109.0px;top:236px;font-size:11px;color:#000;letter-spacing:-0.540px;z-index:22">Sor</span>
</body>
</html>
